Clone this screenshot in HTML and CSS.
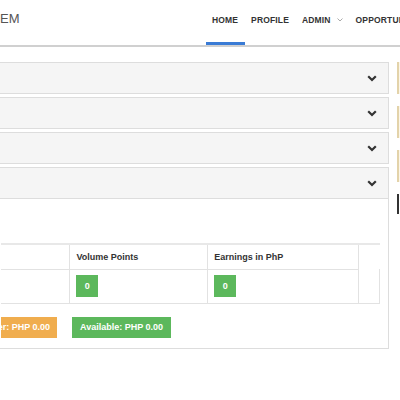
FILE: index.html
```html
<!DOCTYPE html>
<html>
<head>
<meta charset="utf-8">
<link rel="stylesheet" href="styles.css">
</head>
<body>
<header class="header">
  <div class="brand">EM</div>
  <ul class="nav">
    <li class="active">HOME</li>
    <li>PROFILE</li>
    <li>ADMIN <svg class="caret" width="6" height="4" viewBox="0 0 6 4"><path d="M0.5 0.5 L3 3 L5.5 0.5" fill="none" stroke="#aaa" stroke-width="1"/></svg></li>
    <li>OPPORTUNITY</li>
  </ul>
</header>
<div class="main">
  <div class="content">
    <div class="panel"><div class="panel-heading"><svg class="chev" width="10" height="7" viewBox="0 0 10 7"><path d="M1.2 1.2 L5 5 L8.8 1.2" fill="none" stroke="#333" stroke-width="2.2"/></svg></div></div>
    <div class="panel"><div class="panel-heading"><svg class="chev" width="10" height="7" viewBox="0 0 10 7"><path d="M1.2 1.2 L5 5 L8.8 1.2" fill="none" stroke="#333" stroke-width="2.2"/></svg></div></div>
    <div class="panel"><div class="panel-heading"><svg class="chev" width="10" height="7" viewBox="0 0 10 7"><path d="M1.2 1.2 L5 5 L8.8 1.2" fill="none" stroke="#333" stroke-width="2.2"/></svg></div></div>
    <div class="panel">
      <div class="panel-heading"><svg class="chev" width="10" height="7" viewBox="0 0 10 7"><path d="M1.2 1.2 L5 5 L8.8 1.2" fill="none" stroke="#333" stroke-width="2.2"/></svg></div>
      <div class="panel-body">
        <table class="stats">
          <thead>
            <tr><th class="c1"></th><th class="c2">Volume Points</th><th class="c3">Earnings in PhP</th><th class="c4"></th></tr>
          </thead>
          <tbody>
            <tr><td class="c1"></td><td class="c2"><span class="badge">0</span></td><td class="c3"><span class="badge">0</span></td><td class="c4"></td></tr>
          </tbody>
        </table>
        <div class="buttons">
          <div class="btn btn-orange"><span>Transfer: PHP 0.00</span></div>
          <div class="btn btn-green">Available: PHP 0.00</div>
        </div>
      </div>
    </div>
  </div>
  <div class="sidebar">
    <div class="side-box"></div>
    <div class="side-box"></div>
    <div class="side-box"></div>
    <div class="side-dark"></div>
  </div>
</div>
</body>
</html>
```
FILE: styles.css
```css
* { box-sizing: border-box; }
html, body { margin: 0; padding: 0; background: #fff; }
body {
  font-family: "Liberation Sans", Arial, sans-serif;
  width: 400px;
  height: 400px;
  overflow: hidden;
  color: #333;
}
.header {
  height: 47px;
  border-bottom: 2px solid #d0d0d0;
  display: flex;
  align-items: stretch;
  white-space: nowrap;
  overflow: hidden;
}
.brand {
  width: 206px;
  flex: none;
  font-size: 13px;
  color: #555;
  line-height: 38px;
}
.nav {
  list-style: none;
  margin: 0;
  padding: 0;
  display: flex;
  flex: none;
}
.nav li {
  padding: 0 7px 3px 6px;
  font-size: 8.5px;
  font-weight: 700;
  letter-spacing: 0.15px;
  color: #333;
  border-bottom: 3px solid transparent;
  height: 45px;
  display: flex;
  align-items: center;
}
.nav li.active { border-bottom-color: #3a7bd5; }
.caret { margin-left: 6px; }
.main {
  display: flex;
  margin-top: 15px;
}
.content {
  width: 390px;
  margin-left: -1px;
  flex: none;
}
.panel {
  border: 1px solid #ddd;
  margin-bottom: 3px;
}
.panel-heading {
  height: 30px;
  background: #f5f5f5;
  display: flex;
  align-items: center;
  justify-content: flex-end;
  padding-right: 11px;
}
.panel-body {
  border-top: 1px solid #ddd;
  padding: 44px 10px 10px 1px;
}
.stats {
  border-collapse: collapse;
  width: 379px;
}
.stats th {
  height: 25px;
  text-align: left;
  font-size: 9px;
  font-weight: 700;
  color: #333;
  padding: 0 6px;
  border-top: 2px solid #e8e8e8;
  border-bottom: 1px solid #e2e2e2;
  border-left: 1px solid #e2e2e2;
  border-right: 1px solid #e2e2e2;
}
.stats td {
  height: 34px;
  padding: 0 6px;
  border-bottom: 1px solid #e2e2e2;
  border-left: 1px solid #e2e2e2;
  border-right: 1px solid #e2e2e2;
  vertical-align: middle;
}
.stats .c1 { width: 69px; border-left: none; }
.stats .c2 { width: 138px; }
.stats .c3 { width: 151px; }
.stats .c4 { width: 21px; }
.stats th.c4 { border-right: none; border-bottom: none; }
.badge {
  display: inline-flex;
  align-items: center;
  justify-content: center;
  width: 22px;
  height: 22px;
  background: #5cb85c;
  color: #fff;
  font-size: 9px;
  font-weight: 700;
}
.buttons {
  display: flex;
  gap: 15px;
  margin-top: 13px;
}
.btn {
  height: 21px;
  display: flex;
  align-items: center;
  color: #fff;
  font-size: 9px;
  font-weight: 700;
  white-space: nowrap;
}
.btn-orange {
  width: 56px;
  background: #f0ad4e;
  justify-content: flex-end;
  overflow: hidden;
  padding-right: 7px;
}
.btn-orange span { flex: none; }
.btn-green {
  background: #5cb85c;
  padding: 0 8px;
}
.sidebar {
  margin-left: 8px;
  display: flex;
  flex-direction: column;
  gap: 12px;
  flex: none;
  width: 10px;
}
.side-box {
  height: 32px;
  border-left: 2px solid #e3d3aa;
  background: #fcf6e8;
}
.side-dark {
  height: 20px;
  border-left: 2px solid #333;
}
```
